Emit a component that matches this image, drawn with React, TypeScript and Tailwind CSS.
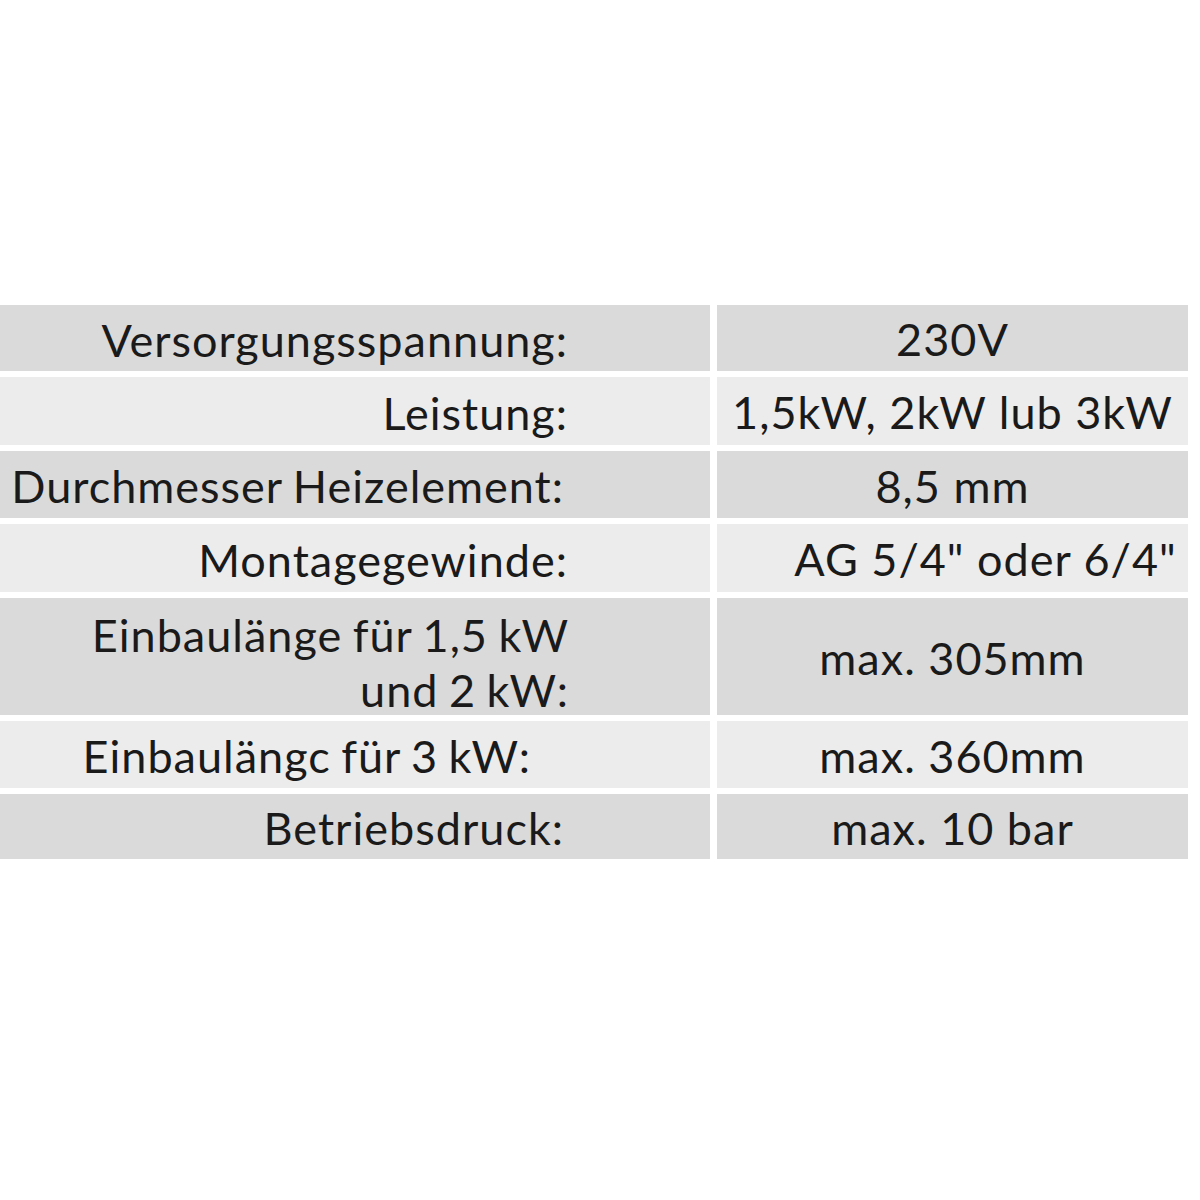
const rows = [
  { label: ["Versorgungsspannung:"], value: "230V", h: "h-[66px]", bg: "bg-[#dadada]", lp: "pr-[142px]", vp: "" },
  { label: ["Leistung:"], value: "1,5kW, 2kW lub 3kW", h: "h-[68px]", bg: "bg-[#ececec]", lp: "pr-[142px]", vp: "" },
  { label: ["Durchmesser Heizelement:"], value: "8,5 mm", h: "h-[67px]", bg: "bg-[#dadada]", lp: "pr-[146px]", vp: "" },
  { label: ["Montagegewinde:"], value: "AG 5/4\" oder 6/4\"", h: "h-[68px]", bg: "bg-[#ececec]", lp: "pr-[142px]", vp: "pl-[66px]" },
  { label: ["Einbaulänge für 1,5 kW", "und 2 kW:"], value: "max. 305mm", h: "h-[117px]", bg: "bg-[#dadada]", lp: "pr-[141px] pt-[12px]", vp: "" },
  { label: ["Einbaulängc für 3 kW:"], value: "max. 360mm", h: "h-[67px]", bg: "bg-[#ececec]", lp: "pr-[179px]", vp: "" },
  { label: ["Betriebsdruck:"], value: "max. 10 bar", h: "h-[65px]", bg: "bg-[#dadada]", lp: "pr-[146px]", vp: "" },
];

export default function App() {
  return (
    <div className="w-[1200px] h-[1200px] bg-white pt-[305px] text-[#1a1a1a] text-[45px] tracking-[1px]" style={{ fontFamily: "Lato, 'Open Sans', sans-serif" }}>
      <div className="flex flex-col gap-[6px]">
        {rows.map((r, i) => (
          <div key={i} className={`flex gap-[7px] ${r.h}`}>
            <div className={`w-[710px] ${r.bg} ${r.lp} flex flex-col justify-center items-end leading-[55px] pt-[4px] [word-spacing:-2px]`}>
              {r.label.map((l, j) => (
                <div key={j} className="whitespace-nowrap">{l}</div>
              ))}
            </div>
            <div className={`w-[471px] ${r.bg} ${r.vp} flex items-center justify-center whitespace-nowrap pt-[4px]`}>
              {r.value}
            </div>
          </div>
        ))}
      </div>
    </div>
  );
}
